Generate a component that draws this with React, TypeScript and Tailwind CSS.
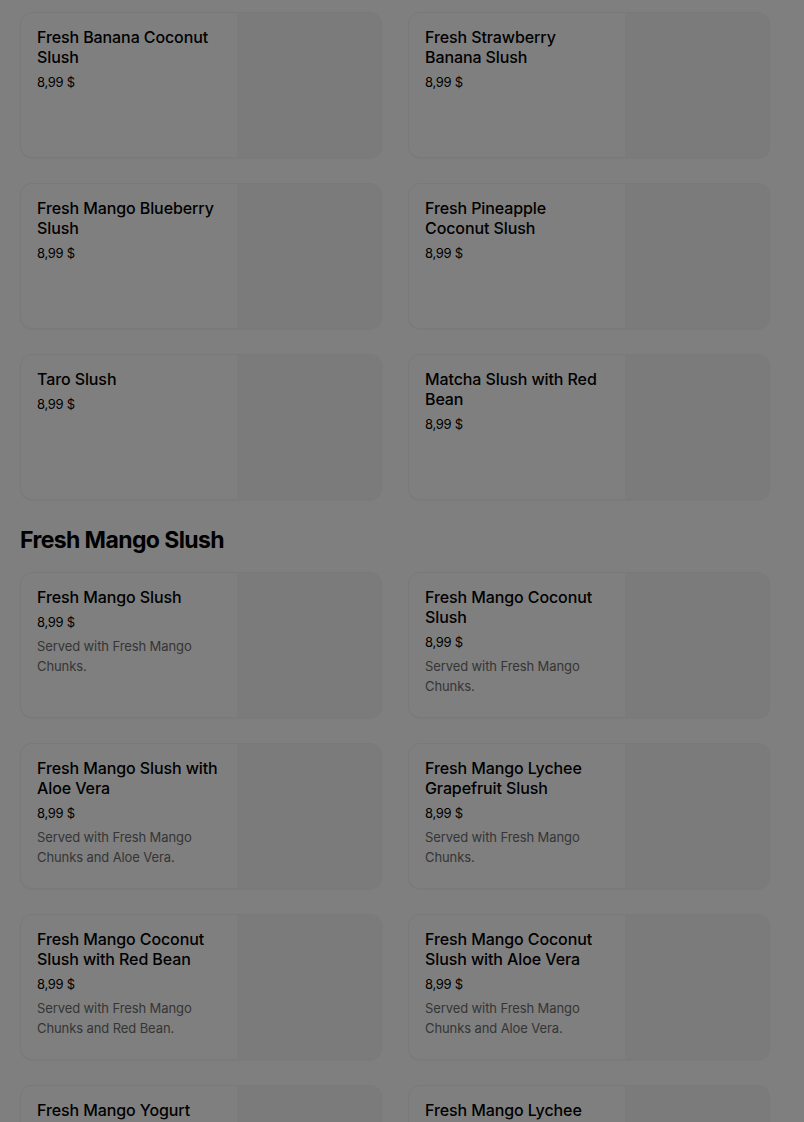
type Item = { name: string; price: string; desc?: string };

const slushes: Item[] = [
  { name: "Fresh Banana Coconut Slush", price: "8,99 $" },
  { name: "Fresh Strawberry Banana Slush", price: "8,99 $" },
  { name: "Fresh Mango Blueberry Slush", price: "8,99 $" },
  { name: "Fresh Pineapple Coconut Slush", price: "8,99 $" },
  { name: "Taro Slush", price: "8,99 $" },
  { name: "Matcha Slush with Red Bean", price: "8,99 $" },
];

const mango: Item[] = [
  { name: "Fresh Mango Slush", price: "8,99 $", desc: "Served with Fresh Mango Chunks." },
  { name: "Fresh Mango Coconut Slush", price: "8,99 $", desc: "Served with Fresh Mango Chunks." },
  { name: "Fresh Mango Slush with Aloe Vera", price: "8,99 $", desc: "Served with Fresh Mango Chunks and Aloe Vera." },
  { name: "Fresh Mango Lychee Grapefruit Slush", price: "8,99 $", desc: "Served with Fresh Mango Chunks." },
  { name: "Fresh Mango Coconut Slush with Red Bean", price: "8,99 $", desc: "Served with Fresh Mango Chunks and Red Bean." },
  { name: "Fresh Mango Coconut Slush with Aloe Vera", price: "8,99 $", desc: "Served with Fresh Mango Chunks and Aloe Vera." },
  { name: "Fresh Mango Yogurt Slush", price: "8,99 $", desc: "Served with Fresh Mango Chunks." },
  { name: "Fresh Mango Lychee Slush", price: "8,99 $", desc: "Served with Fresh Mango Chunks." },
];

function ItemCard({ item }: { item: Item }) {
  return (
    <div className="flex h-[146px] overflow-hidden rounded-xl border border-[#f2f2f2] bg-white shadow-[0_1px_2px_rgba(0,0,0,0.04)]">
      <div className="flex min-w-0 flex-1 flex-col pl-4 pr-3 pt-[14px]">
        <h3 className="text-base font-medium leading-5 tracking-[-0.1px] text-black">{item.name}</h3>
        <p className="mt-[5px] text-[13px] leading-5 tracking-[-0.3px] text-black">{item.price}</p>
        {item.desc && (
          <p className="mt-[4px] text-[13px] leading-5 tracking-[-0.1px] text-[#6b6b6b]">{item.desc}</p>
        )}
      </div>
      <div className="w-[144px] shrink-0 bg-[#f6f6f6]" />
    </div>
  );
}

export default function App() {
  return (
    <div className="relative min-h-screen bg-white font-['Inter',sans-serif]">
      <div className="pl-5 pr-[34px] pt-3">
        <div className="grid grid-cols-2 gap-x-[26px] gap-y-[25px]">
          {slushes.map((it) => (
            <ItemCard key={it.name} item={it} />
          ))}
        </div>
        <h2 className="mb-4 mt-6 text-[23px] font-bold leading-8 tracking-[-0.6px] text-black">
          Fresh Mango Slush
        </h2>
        <div className="grid grid-cols-2 gap-x-[26px] gap-y-[25px]">
          {mango.map((it) => (
            <ItemCard key={it.name} item={it} />
          ))}
        </div>
      </div>
      <div className="fixed inset-0 bg-black/50" />
    </div>
  );
}
